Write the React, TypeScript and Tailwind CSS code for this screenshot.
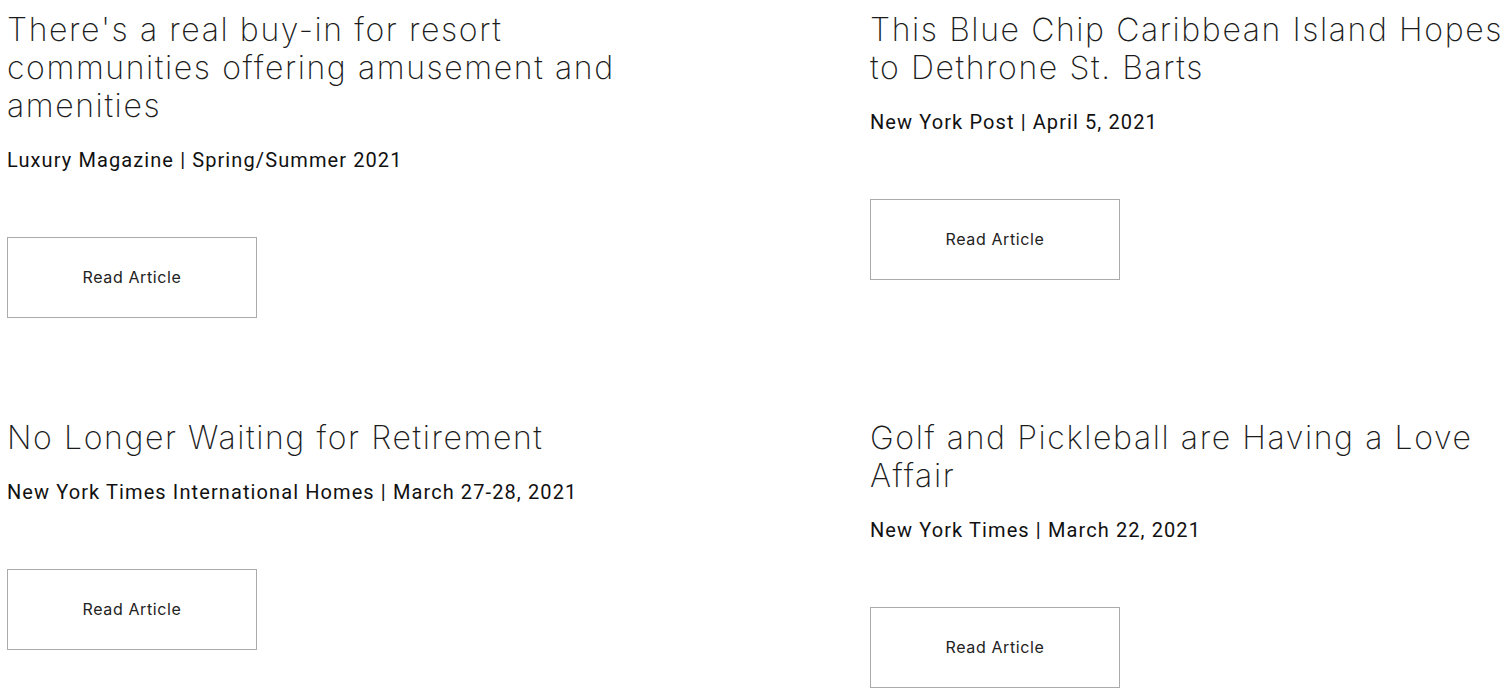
import React from "react"

const articles = [
  {
    title: "There's a real buy-in for resort communities offering amusement and amenities",
    source: "Luxury Magazine | Spring/Summer 2021",
  },
  {
    title: "This Blue Chip Caribbean Island Hopes to Dethrone St. Barts",
    source: "New York Post | April 5, 2021",
  },
  {
    title: "No Longer Waiting for Retirement",
    source: "New York Times International Homes | March 27-28, 2021",
  },
  {
    title: "Golf and Pickleball are Having a Love Affair",
    source: "New York Times | March 22, 2021",
  },
]

export default function App() {
  return (
    <div className="min-h-screen bg-white pl-[7px] pt-[11px]">
      <div className="grid grid-cols-[863px_1fr] gap-y-[101px]">
        {articles.map((a) => (
          <div key={a.title} className="flex flex-col items-start">
            <h2 className="w-[638px] text-[32px] leading-[38px] font-extralight text-[#1c1c1c] tracking-[1.6px] [font-family:Inter,'Noto_Sans',sans-serif]">
              {a.title}
            </h2>
            <p className="mt-[21px] text-[20px] leading-[28px] text-[#111] tracking-[1.1px] [font-family:Roboto,'Liberation_Sans',sans-serif]">
              {a.source}
            </p>
            <a
              href="#"
              className="mt-[63px] flex h-[81px] w-[250px] items-center justify-center border border-[#ababab] pb-[2px] text-[16px] text-[#222] tracking-[0.6px] [font-family:Inter,'Noto_Sans',sans-serif]"
            >
              Read Article
            </a>
          </div>
        ))}
      </div>
    </div>
  )
}
